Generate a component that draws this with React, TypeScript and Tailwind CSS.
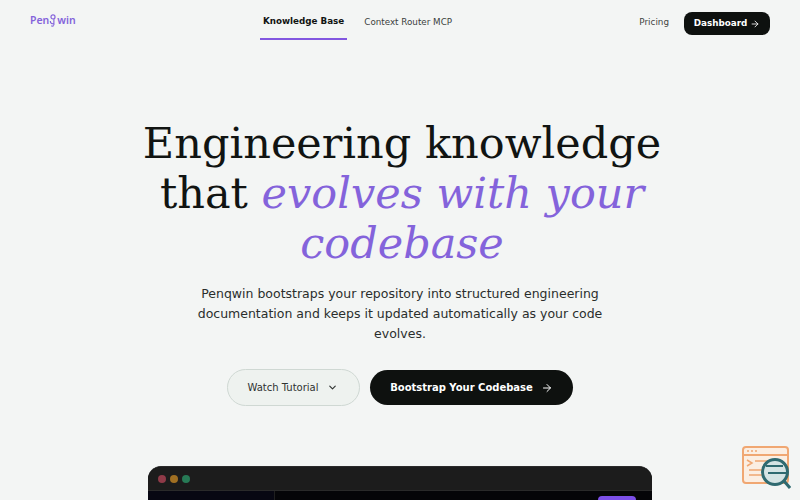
import { ArrowRight, ChevronDown } from 'lucide-react';

function HelpBadge() {
  return (
    <svg width="50" height="44" viewBox="0 0 50 44" fill="none" className="absolute left-[741px] top-[445px]">
      <rect x="2" y="2" width="45" height="36" rx="3" fill="#fbeee2" stroke="#f0a772" strokeWidth="2" />
      <path d="M2 10h45" stroke="#f0a772" strokeWidth="2" />
      <path d="M6 6h2M10 6h2M14 6h2" stroke="#f0a772" strokeWidth="1.5" />
      <path d="M6 15l5 3-5 3M14 16h14M8 25h18M8 30h16" stroke="#f0a772" strokeWidth="1.5" />
      <circle cx="34" cy="27" r="12.5" fill="#d5e4e4" stroke="#2f6a70" strokeWidth="3" />
      <path d="M25 21h17M27 28h19" stroke="#2f6a70" strokeWidth="2" />
      <path d="M43 36l6 7" stroke="#2f6a70" strokeWidth="3" />
    </svg>
  );
}

function LogoMark() {
  return (
    <svg width="8" height="15" viewBox="0 0 9 15" fill="none" stroke="#8463db" strokeWidth="1.3" className="mb-[1px]">
      <circle cx="4.5" cy="3.5" r="2.3" />
      <path d="M5.5 6v6.5M1.5 8c0 2.5 1.5 3.5 4 3M5.5 13c-1 1-2 1-3 .5" />
    </svg>
  );
}

export default function App() {
  return (
    <div className="relative h-[500px] w-[800px] overflow-hidden bg-[#f3f5f4] font-['DejaVu_Sans',sans-serif] text-[#111412]">
      <header className="flex h-10 items-start justify-between px-[30px]">
        <div className="flex h-[42px] items-center font-['Noto_Sans',sans-serif] text-[10.5px] font-semibold text-[#8463db]">
          Pen<LogoMark />win
        </div>
        <nav className="flex h-10 items-start gap-[14px]">
          <a className="flex h-10 items-center border-b-2 border-[#8257e0] px-[3px] pt-[6px] text-[8.75px] font-bold">Knowledge Base</a>
          <a className="flex h-10 items-center px-[3px] pt-[6px] text-[8.75px] text-[#3b3f3d]">Context Router MCP</a>
        </nav>
        <div className="flex h-[46px] items-center gap-[15px]">
          <a className="text-[8.8px] text-[#3f4442]">Pricing</a>
          <button className="flex h-[23px] w-[86px] items-center justify-center gap-[3px] rounded-lg bg-[#0e110f] pt-[1px] text-[8.8px] font-bold text-white">
            Dashboard <ArrowRight size={10} />
          </button>
        </div>
      </header>

      <main className="flex flex-col items-center">
        <h1 className="mt-[78px] ml-[4px] w-[560px] text-center font-['DejaVu_Serif',serif] text-[43px] leading-[50px] font-normal">
          Engineering knowledge that <em className="text-[#8463db]">evolves with your codebase</em>
        </h1>
        <p className="mt-[16px] w-[420px] text-center text-[12.5px] leading-[20px] text-[#2a2e2c]">
          Penqwin bootstraps your repository into structured engineering documentation and keeps it updated automatically as your code evolves.
        </p>
        <div className="mt-[25px] flex items-center gap-[10px]">
          <button className="flex h-[37px] w-[133px] items-center justify-center gap-[8px] rounded-full border border-[#cfd8d3] bg-[#eef2ef] pr-[2px] text-[10px] text-[#2f3331]">
            Watch Tutorial <ChevronDown size={11} strokeWidth={2.5} />
          </button>
          <button className="flex h-[35px] w-[203px] items-center justify-center gap-[8px] rounded-full bg-[#0e110f] text-[10px] font-bold text-white">
            Bootstrap Your Codebase <ArrowRight size={12} />
          </button>
        </div>

        <div className="mt-[60px] h-[200px] w-[504px] overflow-hidden rounded-t-[13px] border-t border-[#2a2a2a] bg-[#050508]">
          <div className="flex h-[24px] items-center gap-[4px] border-b border-[#2a2a2a] bg-[#1c1c1c] pl-[10px]">
            <span className="h-[8px] w-[8px] rounded-full bg-[#8f3a48]" />
            <span className="h-[8px] w-[8px] rounded-full bg-[#a06f22]" />
            <span className="h-[8px] w-[8px] rounded-full bg-[#277a56]" />
          </div>
          <div className="flex">
            <div className="h-[100px] w-[127px] border-r border-[#1f1f1f] bg-[#070712]" />
            <div className="flex flex-1 justify-end pt-[5px] pr-[16px]">
              <div className="h-6 w-[38px] rounded-[4px] bg-[#7c4fe8]" />
            </div>
          </div>
        </div>
      </main>

      <HelpBadge />
    </div>
  );
}
